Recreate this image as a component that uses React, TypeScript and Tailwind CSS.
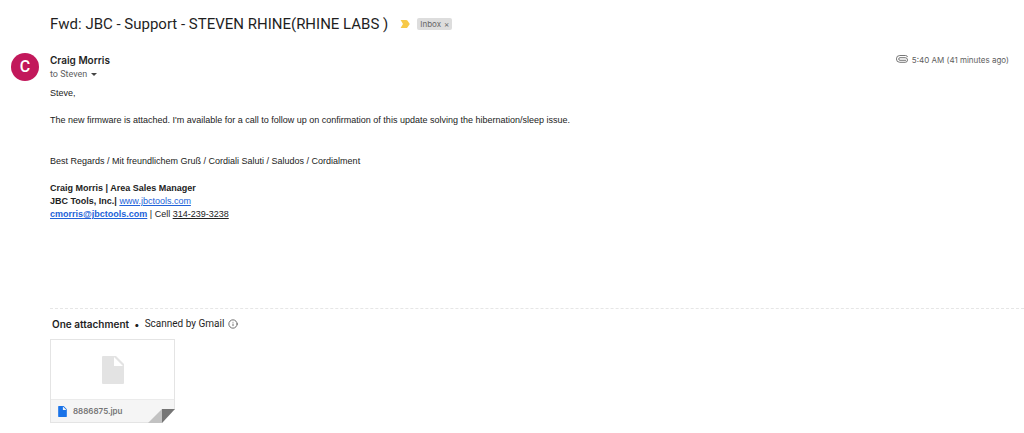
import { Info } from 'lucide-react';

interface Attachment {
  name: string;
}

const attachments: Attachment[] = [{ name: '8886875.jpu' }];

function ImportantMarker() {
  return (
    <svg className="w-[10px] h-2 shrink-0" viewBox="0 0 10 8" fill="#f7c948" aria-label="Important">
      <path d="M0.6 0h5.6c.5 0 .9.2 1.2.6L9.8 4 7.4 7.4c-.3.4-.7.6-1.2.6H.6L3 4z" />
    </svg>
  );
}

function PaperclipIcon() {
  return (
    <svg className="w-3 h-2 shrink-0" viewBox="0 0 12 8" fill="none" stroke="#666" strokeWidth="0.9">
      <path d="M10 5.3H4a1.25 1.25 0 0 1 0-2.6h5.2a2 2 0 0 1 0 4.6H3.8a3.4 3.4 0 0 1 0-6.8H9.6q1.5 0 2 1.6" />
    </svg>
  );
}

function FileIcon({ className }: { className: string }) {
  return (
    <svg className={className} viewBox="0 0 22 28" fill="currentColor">
      <path fillRule="evenodd" d="M1 0h13l8 8v19q0 1-1 1H1q-1 0-1-1V1q0-1 1-1zM12 1v9h9z" />
    </svg>
  );
}

function MessageHeader() {
  return (
    <header className="flex items-start gap-[11px] pl-[11px] pr-[15px]">
      <div className="flex size-7 shrink-0 items-center justify-center rounded-full bg-[#c2185b] font-[Roboto] text-base font-medium text-white">
        C
      </div>
      <div className="flex-1">
        <h2 className="text-[10px] leading-[14px] font-semibold text-[#1f1f1f]">Craig Morris</h2>
        <button className="flex items-center gap-1 font-[Roboto] text-[9px] leading-[14px] text-[#5e5e5e]">
          to Steven
          <svg className="h-[3px] w-[6px]" viewBox="0 0 6 3" fill="#444">
            <path d="M0 0h6L3 3z" />
          </svg>
        </button>
      </div>
      <div className="flex items-start gap-1 text-[8px] leading-[14px] text-[#5e5e5e]">
        <span className="pt-[2px]">
          <PaperclipIcon />
        </span>
        <time>5:40 AM (41 minutes ago)</time>
      </div>
    </header>
  );
}

function MessageBody() {
  return (
    <div className="mt-[6px] pl-[50px] font-['Liberation_Sans',Arial,sans-serif] text-[9px] leading-[13px] text-[#222]">
      <p>Steve,</p>
      <p className="mt-[14px]">
        The new firmware is attached. I'm available for a call to follow up on confirmation of this update solving the
        hibernation/sleep issue.
      </p>
      <p className="mt-7">Best Regards / Mit freundlichem Gruß / Cordiali Saluti / Saludos / Cordialment</p>
      <div className="mt-[14px]">
        <p className="font-bold">Craig Morris | Area Sales Manager</p>
        <p>
          <b>JBC Tools, Inc.|</b>{' '}
          <a href="http://www.jbctools.com" className="text-[#2262d8] underline">www.jbctools.com</a>
        </p>
        <p>
          <a href="mailto:cmorris@jbctools.com" className="font-bold text-[#2262d8] underline">cmorris@jbctools.com</a>
          {' | Cell '}
          <a href="tel:314-239-3238" className="underline">314-239-3238</a>
        </p>
      </div>
    </div>
  );
}

function AttachmentCard({ attachment }: { attachment: Attachment }) {
  return (
    <li className="relative w-[125px] border border-[#e4e4e4]">
      <div className="flex h-[59px] items-center justify-center">
        <FileIcon className="h-7 w-[22px] text-[#e3e3e3]" />
      </div>
      <div className="flex h-[23px] items-center gap-[6px] border-t border-[#ebebeb] bg-[#f5f5f5] pl-[7px]">
        <FileIcon className="h-[11px] w-[9px] text-[#1a73e8]" />
        <span className="text-[8px] leading-[14px] font-semibold text-[#757575]">{attachment.name}</span>
      </div>
      {/* Folded corner */}
      <svg className="absolute -right-px -bottom-px h-[14px] w-[27px]" viewBox="0 0 27 14">
        <path d="M14 14h13V0z" fill="#fff" />
        <path d="M0 14L14 0v14z" fill="#c2c2c2" />
        <path d="M14 0h13L14 14z" fill="#757575" />
      </svg>
    </li>
  );
}

export default function App() {
  return (
    <main className="bg-white pt-[13px] pb-[10px] font-[Inter,Roboto,sans-serif]">
      <div className="flex items-center pl-[50px]">
        <h1 className="font-[Roboto] text-[15px] leading-[22px] text-[#1f1f1f]">
          Fwd: JBC - Support - STEVEN RHINE(RHINE LABS )
        </h1>
        <div className="ml-3 flex items-center gap-[7px]">
          <ImportantMarker />
          <span className="flex h-3 items-center gap-[3px] rounded-[2px] bg-[#dddddd] px-[3px] text-[8px] leading-3 text-[#666]">
            Inbox
            <button aria-label="Remove label Inbox">×</button>
          </span>
        </div>
      </div>

      <article className="mt-[18px]">
        <MessageHeader />
        <MessageBody />

        <section className="mt-[87px] ml-[50px] border-t border-dashed border-[#e6e6e6] pt-2">
          <div className="flex items-center pl-[2px] text-[10px] leading-[14px] text-[#1f1f1f]">
            <h3 className="font-semibold">One attachment</h3>
            <span className="mx-[5px]">•</span>
            <span className="font-[Roboto]">Scanned by Gmail</span>
            <button className="ml-1" aria-label="About attachment scanning">
              <Info className="size-[10px] text-[#555]" />
            </button>
          </div>
          <ul className="mt-2 flex flex-wrap gap-3">
            {attachments.map((attachment) => (
              <AttachmentCard key={attachment.name} attachment={attachment} />
            ))}
          </ul>
        </section>
      </article>
    </main>
  );
}
